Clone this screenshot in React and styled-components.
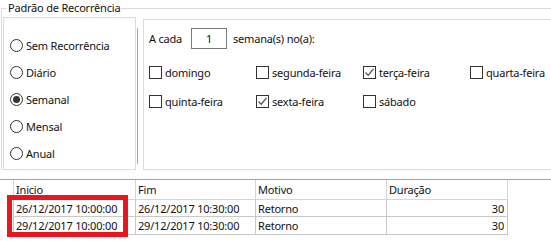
import React from 'react';
import styled, { createGlobalStyle } from 'styled-components';

const GlobalStyle = createGlobalStyle`
    body {
        margin: 0;
        background: #fff;
        font-family: "Noto Sans", "Liberation Sans", sans-serif;
        font-size: 11px;
        letter-spacing: -0.2px;
        color: #111;
    }
`;

const Screen = styled.div`
    position: relative;
    width: 551px;
    height: 241px;
    overflow: hidden;
    background: #fff;
`;

const Group = styled.div`
    position: relative;
    margin: 8px 0 0 1px;
    height: 162px;
    border-top: 1px solid #dcdcdc;
    border-left: 1px solid #dcdcdc;
    display: flex;
    align-items: flex-start;
    padding: 8px 0 0 1px;
    box-sizing: border-box;
`;

const Legend = styled.span`
    position: absolute;
    top: -9px;
    left: 5px;
    padding: 0 1px;
    background: #fff;
    line-height: 16px;
`;

const LeftPanel = styled.div`
    flex: 0 0 133px;
    height: 153px;
    border: 1px solid #dcdcdc;
    box-sizing: border-box;
    padding: 14px 0 0 6px;
`;

const Splitter = styled.div`
    flex: 0 0 1px;
    height: 136px;
    margin: 11px 0 0 1px;
    background: #a0a0a0;
`;

const RightPanel = styled.div`
    flex: 1 0 420px;
    min-width: 0;
    height: 151px;
    margin: 2px 0 0 5px;
    border: 1px solid #dcdcdc;
    border-right: none;
    box-sizing: border-box;
    padding: 8px 0 0 5px;
`;

const RadioRow = styled.label`
    display: flex;
    align-items: center;
    height: 27px;
`;

const RadioCircle = styled.span`
    width: 13px;
    height: 13px;
    border: 1px solid #333;
    border-radius: 50%;
    box-sizing: border-box;
    margin-right: 3px;
    display: flex;
    align-items: center;
    justify-content: center;
    &::after {
        content: '';
        width: 7px;
        height: 7px;
        border-radius: 50%;
        background: ${p => (p.$checked ? '#333' : 'transparent')};
    }
`;

const TopRow = styled.div`
    display: flex;
    align-items: center;
    height: 21px;
`;

const Caption = styled.span`
    width: 42px;
`;

const NumberBox = styled.div`
    width: 36px;
    height: 21px;
    border: 1px solid #7a7a7a;
    box-sizing: border-box;
    display: flex;
    align-items: center;
    justify-content: center;
    margin-right: 6px;
`;

const Days = styled.div`
    display: grid;
    grid-template-columns: repeat(4, 107px);
    grid-auto-rows: 29px;
    margin-top: 9px;
`;

const CheckRow = styled.label`
    display: flex;
    align-items: center;
    white-space: nowrap;
`;

const Box = styled.span`
    width: 13px;
    height: 13px;
    border: 1px solid #333;
    box-sizing: border-box;
    margin-right: 3px;
    display: flex;
    align-items: center;
    justify-content: center;
`;

const Table = styled.div`
    margin-top: 9px;
    border-top: 1px solid #a0a0a0;
    display: grid;
    grid-template-columns: 14px 122px 120px 131px 121px;
`;

const HeadCell = styled.div`
    height: 20px;
    box-sizing: border-box;
    border-right: 1px solid #d6d6d6;
    border-bottom: 1px solid ${p => (p.$blank ? 'transparent' : '#d6d6d6')};
    padding-left: 2px;
    display: flex;
    align-items: center;
`;

const Cell = styled.div`
    height: ${p => p.$h || 17}px;
    box-sizing: border-box;
    border-right: 1px solid #c8c8c8;
    border-bottom: 1px solid ${p => (p.$blank ? 'transparent' : '#c8c8c8')};
    padding: 0 3px 0 2px;
    display: flex;
    align-items: center;
    justify-content: ${p => (p.$right ? 'flex-end' : 'flex-start')};
`;

const Highlight = styled.div`
    position: absolute;
    left: 7px;
    top: 195px;
    width: 121px;
    height: 42px;
    border: 5px solid #e8161f;
    box-sizing: border-box;
`;

const Check = () => (
    <svg width="11" height="11" viewBox="0 0 11 11">
        <path d="M1.5 5.5 L4.2 8.2 L9.5 1.8" fill="none" stroke="#555" strokeWidth="1.3" />
    </svg>
);

const recurrences = ['Sem Recorrência', 'Diário', 'Semanal', 'Mensal', 'Anual'];
const days = [
    ['domingo', false], ['segunda-feira', false], ['terça-feira', true], ['quarta-feira', false],
    ['quinta-feira', false], ['sexta-feira', true], ['sábado', false],
];
const rows = [
    ['26/12/2017 10:00:00', '26/12/2017 10:30:00', 'Retorno', '30', 17],
    ['29/12/2017 10:00:00', '29/12/2017 10:30:00', 'Retorno', '30', 18],
];

export default function App() {
    return (
        <Screen>
            <GlobalStyle />
            <Group>
                <Legend>Padrão de Recorrência</Legend>
                <LeftPanel>
                    {recurrences.map(r => (
                        <RadioRow key={r}>
                            <RadioCircle $checked={r === 'Semanal'} />
                            {r}
                        </RadioRow>
                    ))}
                </LeftPanel>
                <Splitter />
                <RightPanel>
                    <TopRow>
                        <Caption>A cada</Caption>
                        <NumberBox>1</NumberBox>
                        <span>semana(s) no(a):</span>
                    </TopRow>
                    <Days>
                        {days.map(([d, on]) => (
                            <CheckRow key={d}>
                                <Box>{on && <Check />}</Box>
                                {d}
                            </CheckRow>
                        ))}
                    </Days>
                </RightPanel>
            </Group>
            <Table>
                <HeadCell $blank />
                <HeadCell>Inicio</HeadCell>
                <HeadCell>Fim</HeadCell>
                <HeadCell>Motivo</HeadCell>
                <HeadCell>Duração</HeadCell>
                {rows.map(r => (
                    <React.Fragment key={r[0]}>
                        <Cell $blank $h={r[4]} />
                        <Cell $h={r[4]}>{r[0]}</Cell>
                        <Cell $h={r[4]}>{r[1]}</Cell>
                        <Cell $h={r[4]}>{r[2]}</Cell>
                        <Cell $h={r[4]} $right>{r[3]}</Cell>
                    </React.Fragment>
                ))}
            </Table>
            <Highlight />
        </Screen>
    );
}
